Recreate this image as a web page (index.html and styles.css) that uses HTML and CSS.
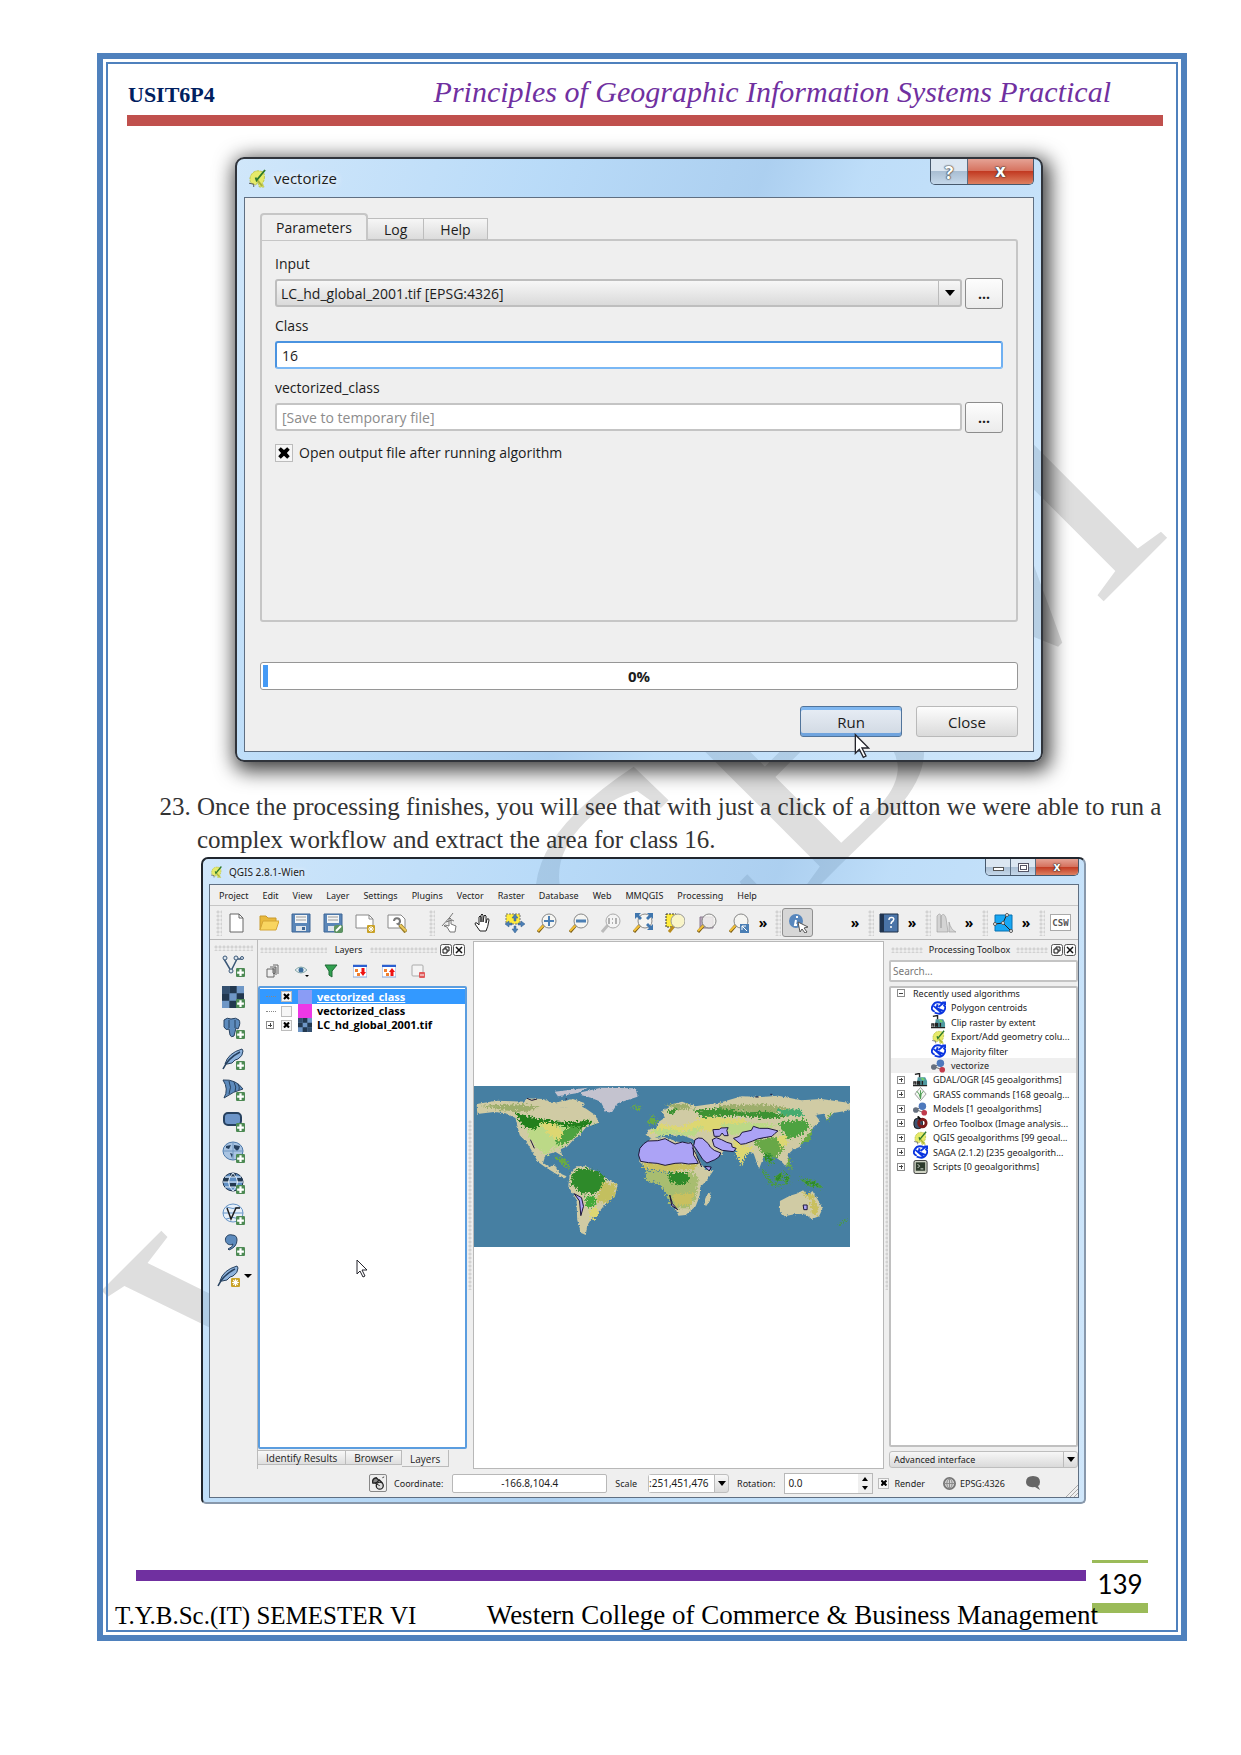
FILE: index.html
```html
<!DOCTYPE html>
<html lang="en">
<head>
<meta charset="utf-8">
<title>USIT6P4 – Principles of Geographic Information Systems Practical</title>
<link rel="stylesheet" href="styles.css">
</head>
<body>
<svg class="defs" width="0" height="0" aria-hidden="true">
  <defs>
    <symbol id="i-plus" viewBox="0 0 8 8"><rect width="8" height="8" rx="1" fill="#4d8a54"/><path d="M4 1v6M1 4h6" stroke="#fff" stroke-width="2"/></symbol>
    <symbol id="i-star" viewBox="0 0 8 8"><rect width="8" height="8" rx="1" fill="#c9a227"/><path d="M4 1v6M1 4h6M2 2l4 4M6 2L2 6" stroke="#fff"/></symbol>
    <symbol id="i-qgis" viewBox="0 0 18 20"><path d="M11 2C5 1 1 6 1 11c0 3 2 5 4 5l2 1 2-3 2 5h5l-2-4c3-3 3-9 1-12z" fill="#e6ea6a" stroke="#b9c34a" stroke-dasharray="3 1"/><path d="M9 12l5 6" stroke="#a9b23c" stroke-width="2"/><path d="M17 1L8 12l-1-3" fill="none" stroke="#2d7a2c" stroke-width="2"/><path d="M0 15l5 1v3" fill="none" stroke="#555"/></symbol>
    <symbol id="i-new" viewBox="0 0 20 20"><path d="M3 1h9l4 4v14H3z" fill="#fff" stroke="#666"/><path d="M12 1v4h4" fill="none" stroke="#666"/></symbol>
    <symbol id="i-open" viewBox="0 0 20 20"><path d="M1 17V3h6l2 2h8v3" fill="#e9b93c" stroke="#c99a2c"/><path d="M1 17L4 8h16l-3 9z" fill="#f9d560" stroke="#d5a636"/></symbol>
    <symbol id="i-save" viewBox="0 0 20 20"><path d="M1 1h18v18H1z" fill="#5a86b8" stroke="#3f6796"/><path d="M4 2h12v8H4z" fill="#f3f5f6"/><path d="M5 4h10M5 7h10" stroke="#999"/><path d="M5 13h10v5H5z" fill="#dfe5ea"/><path d="M11 14h3v3h-3z" fill="#3f6796"/></symbol>
    <symbol id="i-saveas" viewBox="0 0 20 20"><use href="#i-save"/><rect x="11" y="12" width="9" height="8" rx="2" fill="#5e9462"/><path d="M13 18l5-5" stroke="#fff" stroke-width="2"/></symbol>
    <symbol id="i-compose" viewBox="0 0 20 20"><path d="M1 2h13l4 4v9H1z" fill="#fff" stroke="#888"/><path d="M14 2v4h4" fill="none" stroke="#888"/><use href="#i-star" x="12" y="12" width="8" height="8"/></symbol>
    <symbol id="i-composer" viewBox="0 0 20 20"><path d="M1 2h13l4 4v9H1z" fill="#fff" stroke="#888"/><path d="M7 8a3 3 0 1 1 4 3l3 2" fill="none" stroke="#777" stroke-width="2"/><path d="M13 12l6 7" stroke="#9b7f2c" stroke-width="4"/><path d="M13 12l6 6" stroke="#eecb5c" stroke-width="2"/></symbol>
    <symbol id="i-touch" viewBox="0 0 20 20"><path d="M9 19l-3-5-3-1 1-1 4 1V6q1-2 2 0v5l5 2-1 6z" fill="#fff" stroke="#777"/><path d="M1 13l8-9 3-4M5 9l6-2 2 1" fill="none" stroke="#777"/></symbol>
    <symbol id="i-pan" viewBox="0 0 20 20"><path d="M7 18l-5-7q0-2 2-1l2 2V4q1-2 2 0v5V2q1-2 2 0v7l1-6q1-2 2 0v7l1-4q2-1 2 1-1 7-3 11z" fill="#fff" stroke="#222"/></symbol>
    <symbol id="i-panto" viewBox="0 0 20 20"><path d="M1 1h14v10H1z" fill="#ffec3d" stroke="#777" stroke-dasharray="2 1"/><path d="M10 1l3 4h-2v3h-2V5H7zM10 20l3-4h-2v-3h-2v3H7zM0 11l4-3v2h3v2H4v2zM20 11l-4-3v2h-3v2h3v2z" fill="#4b7fb5" stroke="#355f8c" stroke-width=".5"/></symbol>
    <symbol id="i-lens" viewBox="0 0 20 20"><path d="M1 19l6-7" stroke="#7a5c14" stroke-width="3"/><path d="M1 18l6-6" stroke="#f3c13a" stroke-width="2"/><circle cx="12" cy="8" r="7" fill="#f6f6f2" fill-opacity=".8" stroke="#888"/></symbol>
    <symbol id="i-zin" viewBox="0 0 20 20"><use href="#i-lens"/><path d="M12 3v10M7 8h10" stroke="#4b7fb5" stroke-width="2"/></symbol>
    <symbol id="i-zout" viewBox="0 0 20 20"><use href="#i-lens"/><path d="M7 8h10" stroke="#4b7fb5" stroke-width="3"/></symbol>
    <symbol id="i-z11" viewBox="0 0 20 20"><path d="M1 19l6-7" stroke="#bbb" stroke-width="3"/><circle cx="12" cy="8" r="7" fill="#f4f4f4" stroke="#aaa"/><path d="M8 5v6M15 5v6M11 6h1M11 10h1" stroke="#999" stroke-width="1.5"/></symbol>
    <symbol id="i-zfull" viewBox="0 0 20 20"><use href="#i-lens"/><path d="M2 0h6L6 2l3 3-2 2-3-3-2 2zM20 0v6l-2-2-3 3-2-2 3-3-2-2zM20 17h-6l2-2-3-3 2-2 3 3 2-2z" fill="#3f76ae"/></symbol>
    <symbol id="i-zsel" viewBox="0 0 20 20"><path d="M1 1h10v13H1z" fill="#ffec3d" stroke="#333" stroke-dasharray="2 1"/><path d="M4 19l5-6" stroke="#b98c1c" stroke-width="3"/><circle cx="13" cy="8" r="7" fill="#f8f4c8" stroke="#999"/></symbol>
    <symbol id="i-zlayer" viewBox="0 0 20 20"><path d="M3 4h13v11H3z" fill="#b9a9bd" stroke="#8d7b91"/><use href="#i-lens"/></symbol>
    <symbol id="i-zlast" viewBox="0 0 20 20"><use href="#i-lens"/><path d="M11 11h9v9h-9z" fill="#4b7fb5"/><path d="M13 13h4M13 13v4M13 13l5 5" stroke="#fff"/></symbol>
    <symbol id="i-info" viewBox="0 0 20 20"><circle cx="8" cy="8" r="7" fill="#5887bd"/><path d="M9 3v2M8 7l-1 5h2" stroke="#fff" stroke-width="2" fill="none"/><path d="M10 9l10 5-4 1 3 4-2 1-3-4-2 3z" fill="#fff" stroke="#555"/></symbol>
    <symbol id="i-book" viewBox="0 0 20 20"><path d="M1 1h18v18H1z" fill="#4a74a8" stroke="#1e3048"/><path d="M1 1h4v18H1z" fill="#20344f"/><path d="M10 7q0-3 3-2.500t1 3.500q-2 1-2 3M12 13v2" fill="none" stroke="#fff" stroke-width="1.500"/></symbol>
    <symbol id="i-hist" viewBox="0 0 20 20"><path d="M1 19V3q3-4 4 0v12V3q3-4 5 2l2 14zM13 9q2 8 7 10h-7z" fill="#d4d4d4" stroke="#999" stroke-width=".6"/></symbol>
    <symbol id="i-topo" viewBox="0 0 20 20"><path d="M2 2h17v16H2z" fill="#17a7f3" stroke="#0870b0"/><path d="M2 11l8-1 4-9M10 10l8 8" fill="none" stroke="#222"/><g fill="#fff" stroke="#555"><circle cx="2" cy="11" r="1.500"/><circle cx="14" cy="2" r="1.500"/><circle cx="10" cy="10" r="1.500"/><circle cx="18" cy="18" r="1.500"/></g></symbol>
    <symbol id="i-vector" viewBox="0 0 22 22"><path d="M2 4l7 12 6-12h5" fill="none" stroke="#3b5878" stroke-width="1.500"/><g fill="#dce6ef" stroke="#3b5878"><circle cx="3" cy="3" r="2"/><circle cx="9" cy="16" r="2"/><circle cx="14" cy="3" r="2"/><circle cx="20" cy="3" r="1.500"/></g></symbol>
    <symbol id="i-raster" viewBox="0 0 18 18"><path d="M0 0h18v18H0z" fill="#6f97c6"/><path d="M6 0h6v6H6zM0 6h6v6H0zM12 6h6v6h-6zM6 12h6v6H6z" fill="#22384f"/><path d="M0 0h6v6H0zM12 12h6v6h-6z" fill="#34506f"/></symbol>
    <symbol id="i-pg" viewBox="0 0 22 22"><path d="M2 3q3-3 7-1 5-2 8 1 2 3-1 9l-2-1-2 8q-3 2-4-1l-1-6q-3 2-5-2z" fill="#5d8bbd" stroke="#27415f"/><path d="M7 3v8M13 3v8" stroke="#27415f" fill="none"/></symbol>
    <symbol id="i-feather" viewBox="0 0 22 22"><path d="M3 16Q6 5 20 1l1 2q0 5-5 8l-3 1-3 3-5 1z" fill="#8db2dc" stroke="#27415f"/><path d="M1 21Q6 10 18 4" fill="none" stroke="#27415f" stroke-width="1.500"/></symbol>
    <symbol id="i-mssql" viewBox="0 0 22 22"><path d="M1 1q13-1 20 9-9 2-19 9 5-9-1-18z" fill="#5d8bbd" stroke="#27415f"/><path d="M7 2q3 6 0 13M12 3q3 5 1 10M16 5q2 3 1 6" fill="none" stroke="#27415f"/></symbol>
    <symbol id="i-oracle" viewBox="0 0 22 22"><rect x="2" y="3" width="17" height="12" rx="4" fill="#6d95c8" stroke="#27415f" stroke-width="2"/></symbol>
    <symbol id="i-wms" viewBox="0 0 22 22"><ellipse cx="11" cy="10" rx="10" ry="9" fill="#a9c4e2" stroke="#4a77a8"/><path d="M4 5l5-1-2 4-3-1zM12 4l6 1-1 3-2 2-3-3zM8 12l3 1-1 4z" fill="#27415f"/><path d="M1 10h20M11 1v18" stroke="#6e96c0" fill="none"/></symbol>
    <symbol id="i-wcs" viewBox="0 0 22 22"><ellipse cx="11" cy="10" rx="10" ry="9" fill="#5f8fc4" stroke="#1f3550"/><path d="M2 6h5v4H1zM15 6h5v4h-5zM8 11h6v4H8zM8 2h6v3H8z" fill="#22384f"/><path d="M1 10h20M3 5h16M3 15h16M11 1q-9 9 0 18M11 1q9 9 0 18" stroke="#e3eefa" fill="none"/></symbol>
    <symbol id="i-wfs" viewBox="0 0 22 22"><ellipse cx="11" cy="10" rx="10" ry="9" fill="#e7f0f9" stroke="#6795c6"/><path d="M1 10h20M4 4q7 3 14 0M4 16q7-3 14 0" stroke="#6795c6" fill="none"/><path d="M5 5l4 11 5-11h4" stroke="#1d1d1d" stroke-width="1.500" fill="none"/></symbol>
    <symbol id="i-comma" viewBox="0 0 22 22"><path d="M10 1a5 5 0 1 0 1 9q0 3-5 5l1 1q8-3 8-10 0-5-5-5z" fill="#5d8bbd" stroke="#27415f"/></symbol>
    <symbol id="i-saga" viewBox="0 0 16 14"><ellipse cx="8" cy="7" rx="7" ry="6" fill="#fff"/><path d="M12 2Q5-1 2 4t2 7M4 12q7 3 10-2t-1-6M3 5l8 7M7 3L6 7l7 3M8 6l6-5M12 1h3v3" fill="none" stroke="#0a35e0" stroke-width="2"/></symbol>
    <symbol id="i-gdal" viewBox="0 0 16 14"><path d="M5 4h8l2 4v5H4z" fill="#4f9aa1"/><path d="M2 1l5-1v4M0 13h15M1 12V9h2v3M5 12V8l2 4V8M10 12V8" fill="none" stroke="#222" stroke-width="1.500"/><path d="M9 5l3 2" stroke="#73d06b" stroke-width="2"/></symbol>
    <symbol id="i-model" viewBox="0 0 16 14"><path d="M4 8l5-4 3 7z" fill="none" stroke="#666"/><circle cx="10" cy="4" r="4" fill="#4e79bd"/><circle cx="3" cy="8" r="3" fill="#66707f"/><circle cx="12" cy="11" r="3" fill="#c23b4c"/></symbol>
    <symbol id="i-grass" viewBox="0 0 16 14"><path d="M8 0l6 7-6 7-6-7z" fill="#f3f7f1" stroke="#9a9a9a"/><path d="M8 12Q7 6 4 4M8 12q0-6 3-8M8 12V3" fill="none" stroke="#4a9a4e"/></symbol>
    <symbol id="i-otb" viewBox="0 0 16 14"><rect x="1" y="2" width="9" height="11" rx="4" fill="#3e5370" stroke="#111"/><circle cx="10" cy="7" r="4" fill="none" stroke="#7d1a1a" stroke-width="3"/><path d="M5 0l3 3" stroke="#111" stroke-width="2"/></symbol>
    <symbol id="i-script" viewBox="0 0 16 14"><rect x="1" y="0" width="14" height="14" rx="2" fill="#cfd3c4" stroke="#333"/><path d="M3 2h10v9H3z" fill="#2d3b2c"/><path d="M5 4l2 2-2 2M8 9h3" stroke="#dfe8dd" fill="none"/></symbol>
    <symbol id="i-cursor" viewBox="0 0 12 19"><path d="M1 1v14l3-3 3 6 2-1-3-6h5z" fill="#fff" stroke="#24242c"/></symbol>
    <symbol id="i-dock" viewBox="0 0 12 12"><rect x=".5" y=".5" width="11" height="11" rx="2" fill="#fafafa" stroke="#555"/><path d="M5 5V3h4v4H7M3 5h4v4H3z" fill="none" stroke="#111"/></symbol>
    <symbol id="i-x" viewBox="0 0 12 12"><rect x=".5" y=".5" width="11" height="11" rx="2" fill="#fafafa" stroke="#555"/><path d="M3 3l6 6M9 3L3 9" stroke="#111" stroke-width="1.500"/></symbol>
    <filter id="rough" x="0" y="0" width="100%" height="100%"><feTurbulence type="fractalNoise" baseFrequency=".15" numOctaves="2" seed="4"/><feDisplacementMap in="SourceGraphic" scale="9" xChannelSelector="R" yChannelSelector="G"/></filter>
    <filter id="patchy" x="0" y="0" width="100%" height="100%"><feTurbulence type="fractalNoise" baseFrequency=".16" numOctaves="3" seed="7"/><feDisplacementMap in="SourceGraphic" scale="26" xChannelSelector="R" yChannelSelector="G"/></filter>
  </defs>
</svg>

<svg class="watermark" viewBox="0 0 1241 1755" aria-hidden="true"><text x="716" y="989" transform="rotate(-45 716 989)">WCCBM</text></svg>

<div class="sheet"><div class="sheet-inner">
  <header class="page-head">
    <span class="code">USIT6P4</span>
    <h1>Principles of Geographic Information Systems Practical</h1>
  </header>

  <section class="glass dialog" aria-label="vectorize">
    <div class="titlebar">
      <svg class="logo"><use href="#i-qgis"/></svg>
      <span class="title">vectorize</span>
      <div class="winbtns"><button aria-label="Help" class="wb-help">?</button><button class="wb-close" aria-label="Close window">x</button></div>
    </div>
    <form class="client">
      <div class="tabs" role="tablist">
        <button type="button" role="tab" class="tab on">Parameters</button><button type="button" role="tab" class="tab">Log</button><button type="button" role="tab" class="tab">Help</button>
      </div>
      <div class="pane">
        <label for="in">Input</label>
        <div class="row">
          <span class="combo"><select id="in"><option>LC_hd_global_2001.tif [EPSG:4326]</option></select><i class="arr"></i></span>
          <button type="button" class="dots">...</button>
        </div>
        <label for="cls">Class</label>
        <div class="row"><input id="cls" class="field focus" type="text" value="16"></div>
        <label for="out">vectorized_class</label>
        <div class="row">
          <input id="out" class="field" type="text" placeholder="[Save to temporary file]">
          <button type="button" class="dots">...</button>
        </div>
        <label class="check"><input type="checkbox" class="tick" checked>Open output file after running algorithm</label>
      </div>
      <div class="progress" role="progressbar" aria-valuenow="0">0%</div>
      <div class="actions"><button type="button" class="btn primary">Run<svg class="cursor"><use href="#i-cursor"/></svg></button><button type="button" class="btn">Close</button></div>
    </form>
  </section>

  <ol class="steps" start="23"><li>Once the processing finishes, you will see that with just a click of a button we were able to run a complex workflow and extract the area for class 16.</li></ol>

  <section class="glass qgis" aria-label="QGIS 2.8.1-Wien">
    <div class="titlebar">
      <svg class="logo"><use href="#i-qgis"/></svg>
      <span class="title">QGIS 2.8.1-Wien</span>
      <div class="winbtns"><button aria-label="Minimize"><i class="min"></i></button><button aria-label="Maximize"><i class="max"></i></button><button class="wb-close" aria-label="Close QGIS">x</button></div>
    </div>
    <div class="client">
      <nav class="menubar"><a href="#">Project</a><a href="#">Edit</a><a href="#">View</a><a href="#">Layer</a><a href="#">Settings</a><a href="#">Plugins</a><a href="#">Vector</a><a href="#">Raster</a><a href="#">Database</a><a href="#">Web</a><a href="#">MMQGIS</a><a href="#">Processing</a><a href="#">Help</a></nav>
      <div class="toolbar">
        <div class="group file"><i class="grip"></i><svg><use href="#i-new"/></svg><svg><use href="#i-open"/></svg><svg><use href="#i-save"/></svg><svg><use href="#i-saveas"/></svg><svg><use href="#i-compose"/></svg><svg><use href="#i-composer"/></svg></div>
        <div class="group nav"><i class="grip"></i><svg><use href="#i-touch"/></svg><svg><use href="#i-pan"/></svg><svg><use href="#i-panto"/></svg><svg><use href="#i-zin"/></svg><svg><use href="#i-zout"/></svg><svg><use href="#i-z11"/></svg><svg><use href="#i-zfull"/></svg><svg><use href="#i-zsel"/></svg><svg><use href="#i-zlayer"/></svg><svg><use href="#i-zlast"/></svg><button class="more">»</button></div>
        <div class="group attr"><i class="grip"></i><button class="pressed" aria-label="Identify"><svg><use href="#i-info"/></svg></button></div>
        <div class="group right"><button class="more">»</button><i class="grip"></i><svg><use href="#i-book"/></svg><button class="more">»</button><i class="grip"></i><svg><use href="#i-hist"/></svg><button class="more">»</button><i class="grip"></i><svg><use href="#i-topo"/></svg><button class="more">»</button><i class="grip"></i><button class="csw">CSW</button></div>
      </div>
      <div class="work">
        <div class="side"><i class="hgrip"></i>
          <div class="tool"><svg><use href="#i-vector"/></svg><svg class="badge"><use href="#i-plus"/></svg></div>
          <div class="tool"><svg><use href="#i-raster"/></svg><svg class="badge"><use href="#i-plus"/></svg></div>
          <div class="tool"><svg><use href="#i-pg"/></svg><svg class="badge"><use href="#i-plus"/></svg></div>
          <div class="tool"><svg><use href="#i-feather"/></svg><svg class="badge"><use href="#i-plus"/></svg></div>
          <div class="tool"><svg><use href="#i-mssql"/></svg><svg class="badge"><use href="#i-plus"/></svg></div>
          <div class="tool"><svg><use href="#i-oracle"/></svg><svg class="badge"><use href="#i-plus"/></svg></div>
          <div class="tool"><svg><use href="#i-wms"/></svg><svg class="badge"><use href="#i-plus"/></svg></div>
          <div class="tool"><svg><use href="#i-wcs"/></svg><svg class="badge"><use href="#i-plus"/></svg></div>
          <div class="tool"><svg><use href="#i-wfs"/></svg><svg class="badge"><use href="#i-plus"/></svg></div>
          <div class="tool"><svg><use href="#i-comma"/></svg><svg class="badge"><use href="#i-plus"/></svg></div>
          <div class="tool last"><svg><use href="#i-feather"/></svg><svg class="badge"><use href="#i-star"/></svg><i class="caret"></i></div>
        </div>
        <div class="layers">
          <div class="dockhead"><i class="hgrip"></i><span>Layers</span><i class="hgrip"></i><svg><use href="#i-dock"/></svg><svg><use href="#i-x"/></svg></div>
          <div class="minibar">
            <svg viewBox="0 0 14 14"><path d="M1 5h7v8H1zM4 3h6v8M7 1h5v9M7 4v5q1 2 2 0V3" fill="none" stroke="#666"/></svg>
            <svg viewBox="0 0 14 14"><path d="M0 6q6-6 12 0-6 6-12 0z" fill="#e9eef2" stroke="#8aa"/><circle cx="6" cy="6" r="2.500" fill="#3c6e9d"/><path d="M10 11h4l-2 2z"/></svg>
            <svg viewBox="0 0 14 14"><path d="M1 1h12L8 7v6l-3-2V7z" fill="#31a050" stroke="#1f6b35"/></svg>
            <svg viewBox="0 0 14 14"><path d="M0 1h14v12H0z" fill="#fff" stroke="#8aa6d8"/><path d="M0 1h14v2H0z" fill="#2b5fd0"/><path d="M2 5h3v3H2zM4 9h3v3H4z" fill="#f08030"/><path d="M10 4v5" stroke="#e11" stroke-width="3"/><path d="M7 8h6l-3 4z" fill="#e11"/></svg>
            <svg viewBox="0 0 14 14"><path d="M0 1h14v12H0z" fill="#fff" stroke="#8aa6d8"/><path d="M0 1h14v2H0z" fill="#2b5fd0"/><path d="M2 5h3v3H2zM4 9h3v3H4z" fill="#f08030"/><path d="M10 7v5" stroke="#e11" stroke-width="3"/><path d="M7 8h6l-3-4z" fill="#e11"/></svg>
            <svg viewBox="0 0 14 14"><rect x="1" y="1" width="11" height="11" rx="1" fill="#f4f4f4" stroke="#aaa"/><rect x="8" y="8" width="6" height="6" rx="1" fill="#e05a5a"/><path d="M9 11h4" stroke="#fff"/></svg>
          </div>
          <div class="tree">
            <label class="layer sel"><i class="stub"></i><input type="checkbox" class="tick" checked><i class="sw blue"></i><u>vectorized_class</u></label>
            <label class="layer"><i class="stub"></i><input type="checkbox" class="tick"><i class="sw pink"></i>vectorized_class</label>
            <label class="layer"><i class="pm plus"></i><input type="checkbox" class="tick" checked><svg class="sw"><use href="#i-raster"/></svg>LC_hd_global_2001.tif</label>
            <svg class="cursor"><use href="#i-cursor"/></svg>
          </div>
          <div class="btabs"><button>Identify Results</button><button>Browser</button><button class="on">Layers</button></div>
        </div>
        <i class="split"></i>
        <div class="canvas">
          <svg class="map" viewBox="42 51 1134 483" preserveAspectRatio="none" role="img" aria-label="World land cover">
            <path d="M42 51h1134v483H42z" fill="#467fa2"/>
            <g filter="url(#rough)">
              <path d="M365 70l60-14 105 2 5 25-60 20-18 28-18-3-15-30-30-12-30-8zM285 68l100-12-30 16-60 10z" fill="#c4c3cf"/>
              <g fill="#d0cba4">
                <path d="M50 105l60-10 110 4 40 10 60 8 30-12 30 14 28 20 10 22-40 15-15 20-20 15-18 20-22 10 5 20-20-12-30 8-8 25 20 12 15-8 8 18 14 12 14 6-6 7-25-14-35-22-20-14-20-35-15-25-20-20-8-30-5-22-30-14-35-4-50 6z"/>
                <path d="M200 88l50 2 30 12 60-12 35 12-10 16-70-2-60-8-40-10z"/>
                <path d="M330 320l20-28 30 0 40 20 25 20 30 14-8 32-25 22-18 22-25 22-16 26-4 28-14-6-12-40-2-60-25-40z"/>
                <path d="M540 268l15-35 20-25 40-4 40 14 45 4 20 50 18 30 26 2-20 30-20 20-2 28-12 30-30 26-22 2-16-40-8-36-4-52-30-14-40-4-20-16z"/>
                <path d="M562 200l4-18 25-2 6-20 20-14-8-20 30-20 30-8 40 14 70-10 70-20 60 2 50-4 70 14 60-4 86 12v22l-50 8-20 22-8-20-26 4 14 18-20 18-14 26-16 16-12 18-20 8-16 16 6 22-10 14-16-18-14-10-20-18-16 10-16 42-16-46-20-10-44-8-20-2-12 20-26 16-20-34-20-20-30-8-30-12-16 6-28-16-8 10-30 14z"/>
                <path d="M964 396l30-16 20-6 20-10 12 16 16-14 20 32 10 22-10 22-22 8-22-16-30 2-30 6-14-14z"/>
                <path d="M735 400l8-22 14-8-4 26-12 16z"/>
              </g>
            </g>
            <g filter="url(#patchy)">
              <path d="M205 170l60-16 70 12 30 14-30 20-20 30-40 10-12 20-30-20-26-36z" fill="#bcd987"/>
              <path d="M60 110l120-4 60 8-40 14-80-4zM780 108l140-2 80 14-60 12-120-6-40 6zM620 104l60 0 20 14-50 6z" fill="#9dae6c"/>
              <path d="M165 132l50 12 50 10 60 8 60-8 20 8-40 14-60-6-60-6-20 20-34-12z" fill="#24801f"/>
              <path d="M300 190l40-18 30 6-20 24-40 26-24-6z" fill="#4da23f"/>
              <path d="M240 160l50 6 20 24-10 24-30-14z" fill="#ddd772"/>
              <path d="M335 318l24-20 50 6 28 22-6 32-30 18-38-4-26-26z" fill="#2f8a2c"/>
              <path d="M375 386l30-6 4 26-24 14z" fill="#43aa39"/>
              <path d="M430 340l40 6-4 32-22 24-34-4z" fill="#c3bf5e"/>
              <path d="M385 425l26-12 8 24-20 16z" fill="#ddd772"/>
              <path d="M545 284l100-2 70 4-6 14-80 8-70-8z" fill="#c9c05e"/>
              <path d="M560 304l70 8 70-4 20 20-10 60-20 30-50 0-20-44-14-26-46-14z" fill="#a8bd70"/>
              <path d="M628 312l56-4 8 30-30 10-30-10z" fill="#2f8a2c"/>
              <path d="M640 376l66-4-10 34-50 4z" fill="#c9c05e"/>
              <path d="M565 200l40-36 60 10 70-30 120 6 20 20-100 20-80-8-60 12-50-4z" fill="#ddd772"/>
              <path d="M575 180l50 0 50 10 60-20-30 32-60-6-50 4z" fill="#bcd987"/>
              <path d="M615 130l40-14-10 18zM700 122l90-4 60 12 90-2 50 14-60 8-90-10-110 4z" fill="#3c9233"/>
              <path d="M950 120l80 2 4 20-60-2z" fill="#44ab70"/>
              <path d="M960 160l80-8 14 24-30 24-40 10z" fill="#4da23f"/>
              <path d="M780 165l120-4 60 10-80 20-60 6z" fill="#bcd987"/>
              <path d="M885 215l50-10 50 0-10 34-24 30-40-16z" fill="#67a847"/>
              <path d="M820 212l50 22 16 6-26 20-12 32-14-32z" fill="#ddd772"/>
              <path d="M955 204l28-6 4 26-20 14z" fill="#ddd772"/>
              <path d="M1030 370l30 4 20 40-6 26-14-6-4-40z" fill="#c9c05e"/>
              <path d="M285 262l30 12 14 22-20-12zM1110 150l8-16-10 22zM1040 210l18-22-4 24-30 12zM568 162l10-22 14 18-14 6zM545 112l-24 4 10 6zM990 270l8 30-10-6z" fill="#69aa45" stroke="#69aa45" stroke-width="4"/>
              <path d="M910 300l34 48 30 4-38-8zM950 322l24-16-8 26-16 4zM980 320l10 0 0 26-8-2zM1030 330l40 8 18 18-40-8zM1140 470l28-18M915 255l14 26 12 0-6-28" fill="#2f8a2c" stroke="#4a9a45" stroke-width="4"/>
            </g>
            <g fill="#aca3f6" stroke="#1c1638" stroke-width="3" stroke-linejoin="round">
              <path d="M538 258l4-20 12-14 12-8 30-1 22-6 14 8 16 8 22-6 18 4 8-2 6 10 2 28 8 12 6 12-30 2-20-3-20 1-30 6-24-6-26-2-24-4z"/>
              <path d="M708 212l10-5 12 1 18 16 6 10 12 10 20 8-6 12-12 8-24 10-12-10-18-28-10-14z"/>
              <path d="M760 212l12-6 16 6 16 8 14 4 2 10 12 4-8 10-34-4-24-12zM762 182l20-1 4-4 22-1-4 8 4 16-12 0-6-8-8 10-16 0z"/>
              <path d="M824 208l18-6 8-12 28-6 6-12 18 6 26 0 24 6 6 2-10 8-8 8-24 4-20 4-14 6-22 8-14 2z"/>
              <path d="M737 292l20 2-6 12zM344 374l22 12 6 26-8 28-4-44zM632 378l8 26 16 18-18-12zM1034 408l12 0 0 14-10 0z"/>
              <path d="M212 212l12 26M202 88l14 6 16-4M890 84h10M935 76h6M318 90h4M700 236l12 20 16 38" fill="none"/>
            </g>
          </svg>
        </div>
        <i class="split"></i>
        <div class="toolbox">
          <div class="dockhead"><i class="hgrip"></i><span>Processing Toolbox</span><i class="hgrip"></i><svg><use href="#i-dock"/></svg><svg><use href="#i-x"/></svg></div>
          <input class="search" type="text" placeholder="Search..." aria-label="Search">
          <div class="tree">
            <ul class="algs">
              <li><i class="pm"></i>Recently used algorithms</li>
              <li class="sub"><svg><use href="#i-saga"/></svg>Polygon centroids</li>
              <li class="sub"><svg><use href="#i-gdal"/></svg>Clip raster by extent</li>
              <li class="sub"><svg><use href="#i-qgis"/></svg>Export/Add geometry colu...</li>
              <li class="sub"><svg><use href="#i-saga"/></svg>Majority filter</li>
              <li class="sub hot"><svg><use href="#i-model"/></svg>vectorize</li>
              <li><i class="pm plus"></i><svg><use href="#i-gdal"/></svg>GDAL/OGR [45 geoalgorithms]</li>
              <li><i class="pm plus"></i><svg><use href="#i-grass"/></svg>GRASS commands [168 geoalg...</li>
              <li><i class="pm plus"></i><svg><use href="#i-model"/></svg>Models [1 geoalgorithms]</li>
              <li><i class="pm plus"></i><svg><use href="#i-otb"/></svg>Orfeo Toolbox (Image analysis...</li>
              <li><i class="pm plus"></i><svg><use href="#i-qgis"/></svg>QGIS geoalgorithms [99 geoal...</li>
              <li><i class="pm plus"></i><svg><use href="#i-saga"/></svg>SAGA (2.1.2) [235 geoalgorith...</li>
              <li><i class="pm plus"></i><svg><use href="#i-script"/></svg>Scripts [0 geoalgorithms]</li>
            </ul>
          </div>
          <span class="combo small"><select aria-label="Interface"><option>Advanced interface</option></select><i class="arr"></i></span>
        </div>
      </div>
      <div class="status">
        <button class="ext" aria-label="Toggle extents"><svg viewBox="0 0 16 16"><path d="M2 8q-1-5 4-6l3 3q-3 4-7 3zM9 4l4 4" fill="#888" stroke="#222" stroke-width="1.500"/><circle cx="10" cy="11" r="4" fill="#ddd" stroke="#222" stroke-width="1.500"/><path d="M4 8l6 3M13 2l2-1" stroke="#222"/></svg></button>
        <label for="xy">Coordinate:</label><input id="xy" class="xy" type="text" value="-166.8,104.4">
        <label for="sc">Scale</label><span class="combo scale"><input id="sc" type="text" value=":251,451,476"><i class="arr"></i></span>
        <label for="rot">Rotation:</label><span class="spin"><input id="rot" type="text" value="0.0"><i class="ud"></i></span>
        <label class="render"><input type="checkbox" class="tick" checked>Render</label>
        <button class="crs"><svg viewBox="0 0 14 14"><circle cx="7" cy="7" r="6" fill="#d5d5d5" stroke="#777" stroke-width="2"/><path d="M1 7h12M7 1v12M7 1q-6 6 0 12M7 1q6 6 0 12" fill="none" stroke="#888"/></svg>EPSG:4326</button>
        <svg class="bubble" viewBox="0 0 15 14"><path d="M7 0q7 0 7 6 0 3-2 4l2 4-5-3Q0 12 0 6q0-6 7-6z" fill="#666"/></svg>
        <svg class="sizegrip" viewBox="0 0 12 12"><path d="M0 12L12 0M4 12l8-8M8 12l4-4" stroke="#aaa"/></svg>
      </div>
    </div>
  </section>

  <footer class="page-foot">
    <div class="rules"><i class="bar"></i><span class="num">139</span></div>
    <div class="names"><span>T.Y.B.Sc.(IT) SEMESTER VI</span><span class="college">Western College of Commerce &amp; Business Management</span><i class="green"></i></div>
  </footer>
</div></div>
</body>
</html>
```
FILE: styles.css
```css
* { box-sizing: border-box; }
body { margin: 0; padding: 53px 54px 112px 97px; background: #fff; font-family: "Liberation Serif", serif; position: relative; }
button, input, select { font: inherit; color: inherit; margin: 0; padding: 0; border: 0; background: none; min-width: 0; }
svg { display: block; flex: none; }
i { display: block; flex: none; font-style: normal; }
.defs { position: absolute; }
.watermark { position: absolute; left: 0; top: 0; width: 100%; z-index: -1; }
.watermark text { font-size: 338px; text-anchor: middle; fill: #dedede; }

.sheet { border: 6px solid #4f81bd; padding: 3px; }
.sheet-inner { border: 2px solid #4f81bd; }
.page-head { margin: 0 13px 0 19px; height: 62px; border-bottom: 11px solid #c0504d; display: flex; align-items: baseline; justify-content: space-between; padding: 11px 52px 0 1px; }
.code { font-weight: bold; font-size: 22px; color: #002060; }
.page-head h1 { margin: 0; font-size: 30px; line-height: 34px; font-weight: normal; font-style: italic; color: #7030a0; white-space: nowrap; }

/* Aero window frame */
.glass { font-family: "Open Sans", sans-serif; color: #1c1c1c; border: 2px solid #30343b; display: flex; flex-direction: column;
  background: linear-gradient(110deg, rgba(100,175,240,.3), rgba(100,175,240,.45) 30%, rgba(90,160,225,.5) 52%, rgba(100,175,240,.42) 62%, rgba(100,175,240,.3)); }
.titlebar { display: flex; align-items: center; flex: none; }
.winbtns { display: flex; margin-left: auto; align-self: flex-start; border: 1px solid #46586c; border-top: 0; border-radius: 0 0 5px 5px; overflow: hidden; }
.winbtns button { background: linear-gradient(#dbe6f1 50%, #a9bed3 50%, #c5d8ea); border-right: 1px solid #5b6d81; display: grid; place-items: center; color: #fff; font-weight: bold; text-shadow: 0 0 2px #333, 0 0 1px #333, 0 0 1px #333; }
.winbtns .wb-close { background: linear-gradient(#e5a294, #d5705c 50%, #c23a22 50%, #dd8060); border-right: 0; }
.client { border: 1px solid #5f6f82; background: #efefef; flex: 1; }

.dialog { margin: 31px 133px 0 127px; height: 605px; border-radius: 9px; font-size: 14px; box-shadow: 3px 5px 20px 4px rgba(0,0,0,.75); padding: 0 7px 8px; }
.dialog .titlebar { height: 38px; padding-left: 5px; }
.dialog .logo { width: 17px; height: 21px; }
.dialog .title { margin-left: 8px; font-size: 15px; text-shadow: 0 0 8px #fff, 0 0 8px #fff; }
.dialog .winbtns button { width: 37px; height: 25px; font-size: 18px; }
.dialog .winbtns .wb-close { width: 65px; line-height: 18px; padding-bottom: 3px; }
.dialog .client { padding: 16px 15px 0; }
.tabs { display: flex; align-items: flex-end; height: 26px; position: relative; margin-bottom: -1px; }
.tab { height: 22px; padding: 0 16px; border: 1px solid #bdbdbd; border-left: 0; background: linear-gradient(#f6f6f6, #dcdcdc); }
.tab.on { height: 27px; width: 108px; padding: 0; border: 2px solid #c6c6c6; border-bottom: 0; border-radius: 4px 4px 0 0; background: #efefef; }
.pane { border: 2px solid #c6c6c6; border-radius: 0 3px 3px 3px; height: 383px; padding: 12px 13px; display: flex; flex-direction: column; }
.pane label { line-height: 22px; }
.row { display: flex; gap: 3px; height: 30px; align-items: center; margin: 3px 0 7px; }
.combo { position: relative; display: flex; flex: 1; height: 28px; border: 2px solid #bebebe; border-radius: 3px; background: linear-gradient(#f7f7f7, #dadada); }
.combo select { appearance: none; flex: 1; padding-left: 4px; }
.arr { width: 22px; border-left: 1px solid #bbb; display: grid; place-items: center; }
.arr::after { content: ""; border: 5px solid transparent; border-top: 6px solid #000; border-bottom: 0; }
.dots { width: 38px; height: 31px; border: 1px solid #8c8c8c; border-radius: 3px; background: linear-gradient(#fdfdfd, #ebebeb); font-weight: bold; }
.field { flex: 1; height: 28px; border: 2px solid #c4c4c4; border-radius: 3px; background: #fff; padding-left: 5px; }
.field::placeholder { color: #8c8c8c; }
.focus { border-color: #4a93e0 #6fb0f2 #7ab8f5 #4a93e0; }
.check { display: flex; align-items: center; gap: 6px; margin-top: 3px; }
.tick { appearance: none; flex: none; width: 18px; height: 18px; border: 1px solid #bcbcbc; background: #f6f6f6; display: grid; place-items: center; }
.tick:checked::before { content: ""; width: 72%; height: 72%; background: #000; clip-path: polygon(0 22%, 22% 0, 50% 25%, 78% 0, 100% 22%, 75% 50%, 100% 78%, 78% 100%, 50% 75%, 22% 100%, 0 78%, 25% 50%); }
.progress { margin-top: 40px; height: 28px; border: 1px solid #969696; border-radius: 3px; background: linear-gradient(#459af5, #459af5) 2px 2px / 5px 22px no-repeat #fff; text-align: center; line-height: 27px; font-size: 15px; font-weight: bold; }
.actions { display: flex; justify-content: flex-end; gap: 14px; margin-top: 16px; }
.btn { position: relative; width: 102px; height: 31px; border: 1px solid #b9b9b9; border-radius: 3px; background: linear-gradient(#fdfdfd, #dadada); font-size: 15px; }
.primary { border-color: #51749b; background: linear-gradient(#e8eef6, #d0d8e2); box-shadow: inset 0 3px #80b7f0, inset 0 -3px #70a4de; }
.cursor { position: absolute; width: 16px; height: 26px; }
.primary .cursor { left: 53px; top: 26px; }

.steps { margin: 28px 0 0; padding: 0 4px 0 89px; list-style-position: outside; font-size: 25px; line-height: 33px; color: #333; position: relative; }

.qgis { font-family: "Noto Sans", sans-serif; margin: 1px 90px 0 93px; font-size: 9px; border-color: #20262e #8898ab #8898ab #20262e; border-radius: 7px 7px 5px 5px; padding: 0 5px 4px 6px; }
.qgis .titlebar { height: 25px; }
.qgis .logo { width: 11px; height: 14px; margin-left: 2px; }
.qgis .title { margin-left: 7px; font-size: 10px; text-shadow: 0 0 5px #fff; }
.qgis .winbtns button { width: 25px; height: 16px; font-size: 10px; line-height: 12px; }
.qgis .winbtns .wb-close { width: 42px; font-size: 12px; }
.min { width: 11px; height: 4px; border: 1px solid #555; background: #fff; margin-top: 4px; }
.max { width: 11px; height: 9px; border: 3px double #556; background: #fff; }
.qgis .client { display: flex; flex-direction: column; }
.menubar { display: flex; height: 21px; align-items: center; gap: 14px; padding-left: 9px; border-bottom: 1px solid #c6c6c6; }
.menubar a { color: #1c1c1c; text-decoration: none; }
.toolbar { display: flex; height: 34px; align-items: center; border-bottom: 1px solid #b8b8b8; padding: 0 7px 0 6px; }
.toolbar svg { width: 20px; height: 20px; }
.group { display: flex; align-items: center; gap: 12px; }
.grip { width: 6px; height: 26px; background: radial-gradient(circle, #d2d2d2 1px, transparent 2px) 0 0 / 4px 4px; margin-right: -6px; }
.file .grip { margin-right: -7px; }
.nav { margin-left: 22px; }
.more { width: 10px; font-size: 14px; line-height: 14px; font-weight: bold; color: #000; }
.nav .more { margin-left: -3px; }
.attr { margin-left: 7px; }
.attr .grip { margin-right: -11px; }
.pressed { width: 31px; height: 29px; border: 1px solid #909090; border-radius: 3px; background: #d6d6d6; display: grid; place-items: center; }
.right { margin-left: auto; gap: 8px; }
.right .grip { margin-right: -3px; }
.csw { width: 21px; height: 17px; border: 1px solid #aaa; background: #fff; color: #555; font: bold 9px "DejaVu Sans Mono", monospace; }
.work { display: grid; grid-template-columns: 47px 210px 6px minmax(0, 1fr) 5px 189px; height: 529px; }
.side { display: flex; flex-direction: column; padding: 5px 4px; }
.hgrip { height: 6px; flex: 1; background: radial-gradient(circle, #d2d2d2 1px, transparent 2px) 0 0 / 4px 4px; }
.side .hgrip { flex: none; margin-bottom: 2px; }
.tool { position: relative; height: 31px; padding: 2px 8px; }
.tool svg { width: 22px; height: 22px; }
.tool .badge { position: absolute; left: 22px; top: 15px; width: 9px; height: 9px; }
.tool.last { padding-left: 3px; }
.tool.last .badge { left: 17px; }
.caret { position: absolute; left: 30px; top: 11px; border: 4px solid transparent; border-top-color: #000; }
.layers { display: flex; flex-direction: column; border-left: 1px solid #bbb; }
.dockhead { display: flex; align-items: center; gap: 3px; height: 18px; padding: 1px 2px 0 2px; flex: none; }
.dockhead span { padding: 0 5px; }
.dockhead svg { width: 12px; height: 12px; }
.dockhead svg + svg { margin-left: -2px; }
.minibar { display: flex; height: 28px; align-items: center; gap: 15px; padding: 0 0 3px 8px; }
.minibar svg { width: 14px; height: 14px; }
.tree { position: relative; flex: 1; background: #fff; border: 2px solid #c0c0c0; border-radius: 2px; }
.layers .tree { border-color: #5b9ddf; padding-top: 1px; }
.layer { display: flex; align-items: center; height: 15px; font: bold 11px/14px "Open Sans", sans-serif; color: #000; padding-left: 6px; }
.layer.sel { background: #3399ff; color: #fff; }
.layer .tick { width: 11px; height: 11px; margin: 0 6px 0 5px; }
.layer:not(.sel) { height: 14px; }
.stub { width: 10px; border-top: 1px dotted #888; }
.sw { width: 14px; height: 14px; margin-right: 5px; }
.blue { background: #8a9cf5; } .pink { background: #ed38e6; }
.pm { width: 8px; height: 8px; border: 1px solid #8c8c8c; background: linear-gradient(#444, #444) 50% 50% / 4px 1px no-repeat; }
.pm.plus { background: linear-gradient(#444, #444) 50% 50% / 4px 1px no-repeat, linear-gradient(#444, #444) 50% 50% / 1px 4px no-repeat; }
.layer .pm { margin-right: 2px; }
.layers .cursor { width: 12px; height: 19px; left: 96px; top: 271px; }
.btabs { display: flex; height: 19px; margin-top: 1px; align-items: flex-start; font-family: "Open Sans", sans-serif; font-size: 10px; }
.btabs button { height: 15px; padding: 0 8px; border: 1px solid #bbb; border-left: 0; background: linear-gradient(#f8f8f8, #dedede); line-height: 12px; }
.btabs .on { height: 17px; border-top: 0; background: #efefef; padding: 2px 8px 0; }
.split { align-self: center; margin: 0 1px; height: 170px; background: radial-gradient(circle, #d2d2d2 1px, transparent 2px) 0 0 / 4px 4px; }
.canvas { background: #fff; border: 1px solid #b8b8b8; margin-top: 1px; }
.map { width: 92%; height: 161px; margin-top: 144px; }
.toolbox { display: flex; flex-direction: column; }
.toolbox .dockhead span { padding: 0 3px; }
.search { height: 22px; margin: 2px 0 4px; border: 2px solid #c4c4c4; border-radius: 2px; background: #fff; padding-left: 2px; flex: none; font-size: 10px; }
.search::placeholder { color: #777; }
.algs { margin: -2px 0 0; padding: 0; list-style: none; height: 188px; display: grid; grid-auto-rows: 1fr; }
.algs li { display: flex; align-items: center; white-space: nowrap; padding-left: 6px; min-height: 0; }
.algs .pm { margin-right: 8px; }
.algs svg { width: 15px; height: 14px; margin-right: 5px; }
.algs .sub { padding-left: 40px; }
.algs .hot { background: #efefef; }
.small { flex: none; height: 17px; margin: 4px 0 1px; border-width: 1px; }
.small .arr, .scale .arr { width: 14px; }
.small .arr::after, .scale .arr::after { border-width: 5px 4px 0; }
.status { display: flex; align-items: center; height: 28px; padding-left: 159px; position: relative; }
.ext { width: 18px; height: 18px; border: 1px solid #888; border-radius: 2px; margin-right: 7px; }
.ext svg { width: 14px; height: 14px; margin: auto; }
.status input[type=text] { background: #fff; font-size: 10px; }
.status .xy { width: 155px; height: 19px; border: 1px solid #b8b8b8; border-radius: 2px; text-align: center; margin: 0 8px 0 9px; }
.scale { flex: none; width: 81px; height: 19px; border-width: 1px; margin: 0 8px 0 11px; }
.scale input { flex: 1; width: 60px; }
.spin { display: flex; width: 89px; height: 21px; border: 1px solid #b8b8b8; margin: 0 5px 0 9px; }
.spin input { flex: 1; width: 60px; padding-left: 3px; }
.ud { width: 14px; display: flex; flex-direction: column; align-items: center; justify-content: space-between; padding: 3px 0; }
.ud::before, .ud::after { content: ""; border: 3px solid transparent; border-width: 0 3px 4px; border-bottom-color: #000; }
.ud::after { border-width: 4px 3px 0; border-top-color: #000; }
.render { display: flex; align-items: center; gap: 5px; }
.render .tick { width: 11px; height: 11px; }
.crs { display: flex; align-items: center; gap: 4px; margin-left: 18px; }
.crs svg { width: 13px; height: 13px; }
.bubble { width: 15px; height: 14px; margin-left: 21px; }
.sizegrip { position: absolute; right: 0; bottom: 0; width: 12px; height: 12px; }

.page-foot { margin: 56px 0 0; color: #000; }
.rules { display: flex; padding: 0 28px; }
.bar { flex: 1; height: 11px; margin: 10px 6px 0 0; background: #7030a0; }
.num { width: 56px; border-top: 3px solid #9bbb59; font: 26px "Lato", sans-serif; line-height: 42px; text-align: center; }
.names { position: relative; display: flex; align-items: baseline; padding-left: 7px; height: 25px; line-height: 21px; font-size: 25px; white-space: nowrap; }
.college { font-size: 27px; margin-left: auto; padding-right: 78px; }
.green { position: absolute; z-index: -1; right: 28px; top: -2px; width: 56px; height: 10px; background: #9bbb59; }
```
